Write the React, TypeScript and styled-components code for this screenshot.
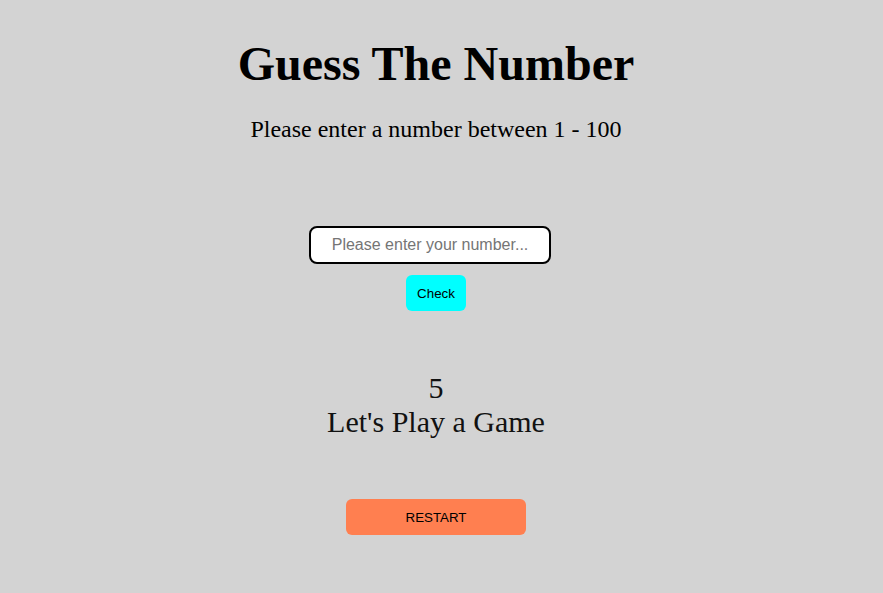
import React, { useState } from "react";
import styled, { createGlobalStyle } from "styled-components";

const Global = createGlobalStyle`
  html, body {
    margin: 0;
    padding: 0;
    background: lightgray;
    font-family: "Liberation Serif", "Times New Roman", serif;
  }
`;

export default function App() {
  const [guess, setGuess] = useState("");
  const [message, setMessage] = useState("Let's Play a Game");
  const [lives, setLives] = useState(5);

  const check = () => {
    if (!guess) return;
    setLives((l) => Math.max(l - 1, 0));
    setMessage("Try again");
  };

  const restart = () => {
    setGuess("");
    setLives(5);
    setMessage("Let's Play a Game");
  };

  return (
    <>
      <Global />
      <Page>
        <Title>Guess The Number</Title>
        <Subtitle>Please enter a number between 1 - 100</Subtitle>
        <Form>
          <NumberInput
            type="text"
            placeholder="Please enter your number..."
            value={guess}
            onChange={(e) => setGuess(e.target.value)}
          />
          <CheckButton onClick={check}>Check</CheckButton>
        </Form>
        <Status>
          <div>{lives}</div>
          <div>{message}</div>
        </Status>
        <RestartButton onClick={restart}>RESTART</RestartButton>
      </Page>
    </>
  );
}

//  styling
const Page = styled.div`
  display: flex;
  flex-direction: column;
  align-items: center;
  text-align: center;
  min-height: 593px;
  padding: 32px 11px 0 0;
  box-sizing: border-box;
`;

const Title = styled.h1`
  font-size: 48px;
  font-weight: bold;
  margin: 0;
  line-height: 64px;
`;

const Subtitle = styled.p`
  font-size: 24px;
  margin: 19px 0 0;
  line-height: 28px;
`;

const Form = styled.div`
  display: flex;
  flex-direction: column;
  align-items: center;
  gap: 11px;
  margin-top: 83px;
`;

const NumberInput = styled.input`
  width: 242px;
  height: 38px;
  margin-right: 12px;
  box-sizing: border-box;
  border: 2px solid #000;
  border-radius: 8px;
  background: #fff;
  font-family: "Liberation Sans", Arial, sans-serif;
  font-size: 16px;
  text-align: center;
  outline: none;
  &::placeholder {
    color: #757575;
  }
`;

const CheckButton = styled.button`
  width: 60px;
  height: 36px;
  border: none;
  border-radius: 6px;
  background: cyan;
  color: #000;
  font-family: "Liberation Sans", Arial, sans-serif;
  font-size: 13.33px;
  cursor: pointer;
`;

const Status = styled.div`
  margin-top: 60px;
  font-size: 30px;
  line-height: 34px;
  color: #111;
`;

const RestartButton = styled.button`
  width: 180px;
  height: 36px;
  margin-top: 60px;
  border: none;
  border-radius: 6px;
  background: coral;
  color: #000;
  font-family: "Liberation Sans", Arial, sans-serif;
  font-size: 13.33px;
  cursor: pointer;
`;
